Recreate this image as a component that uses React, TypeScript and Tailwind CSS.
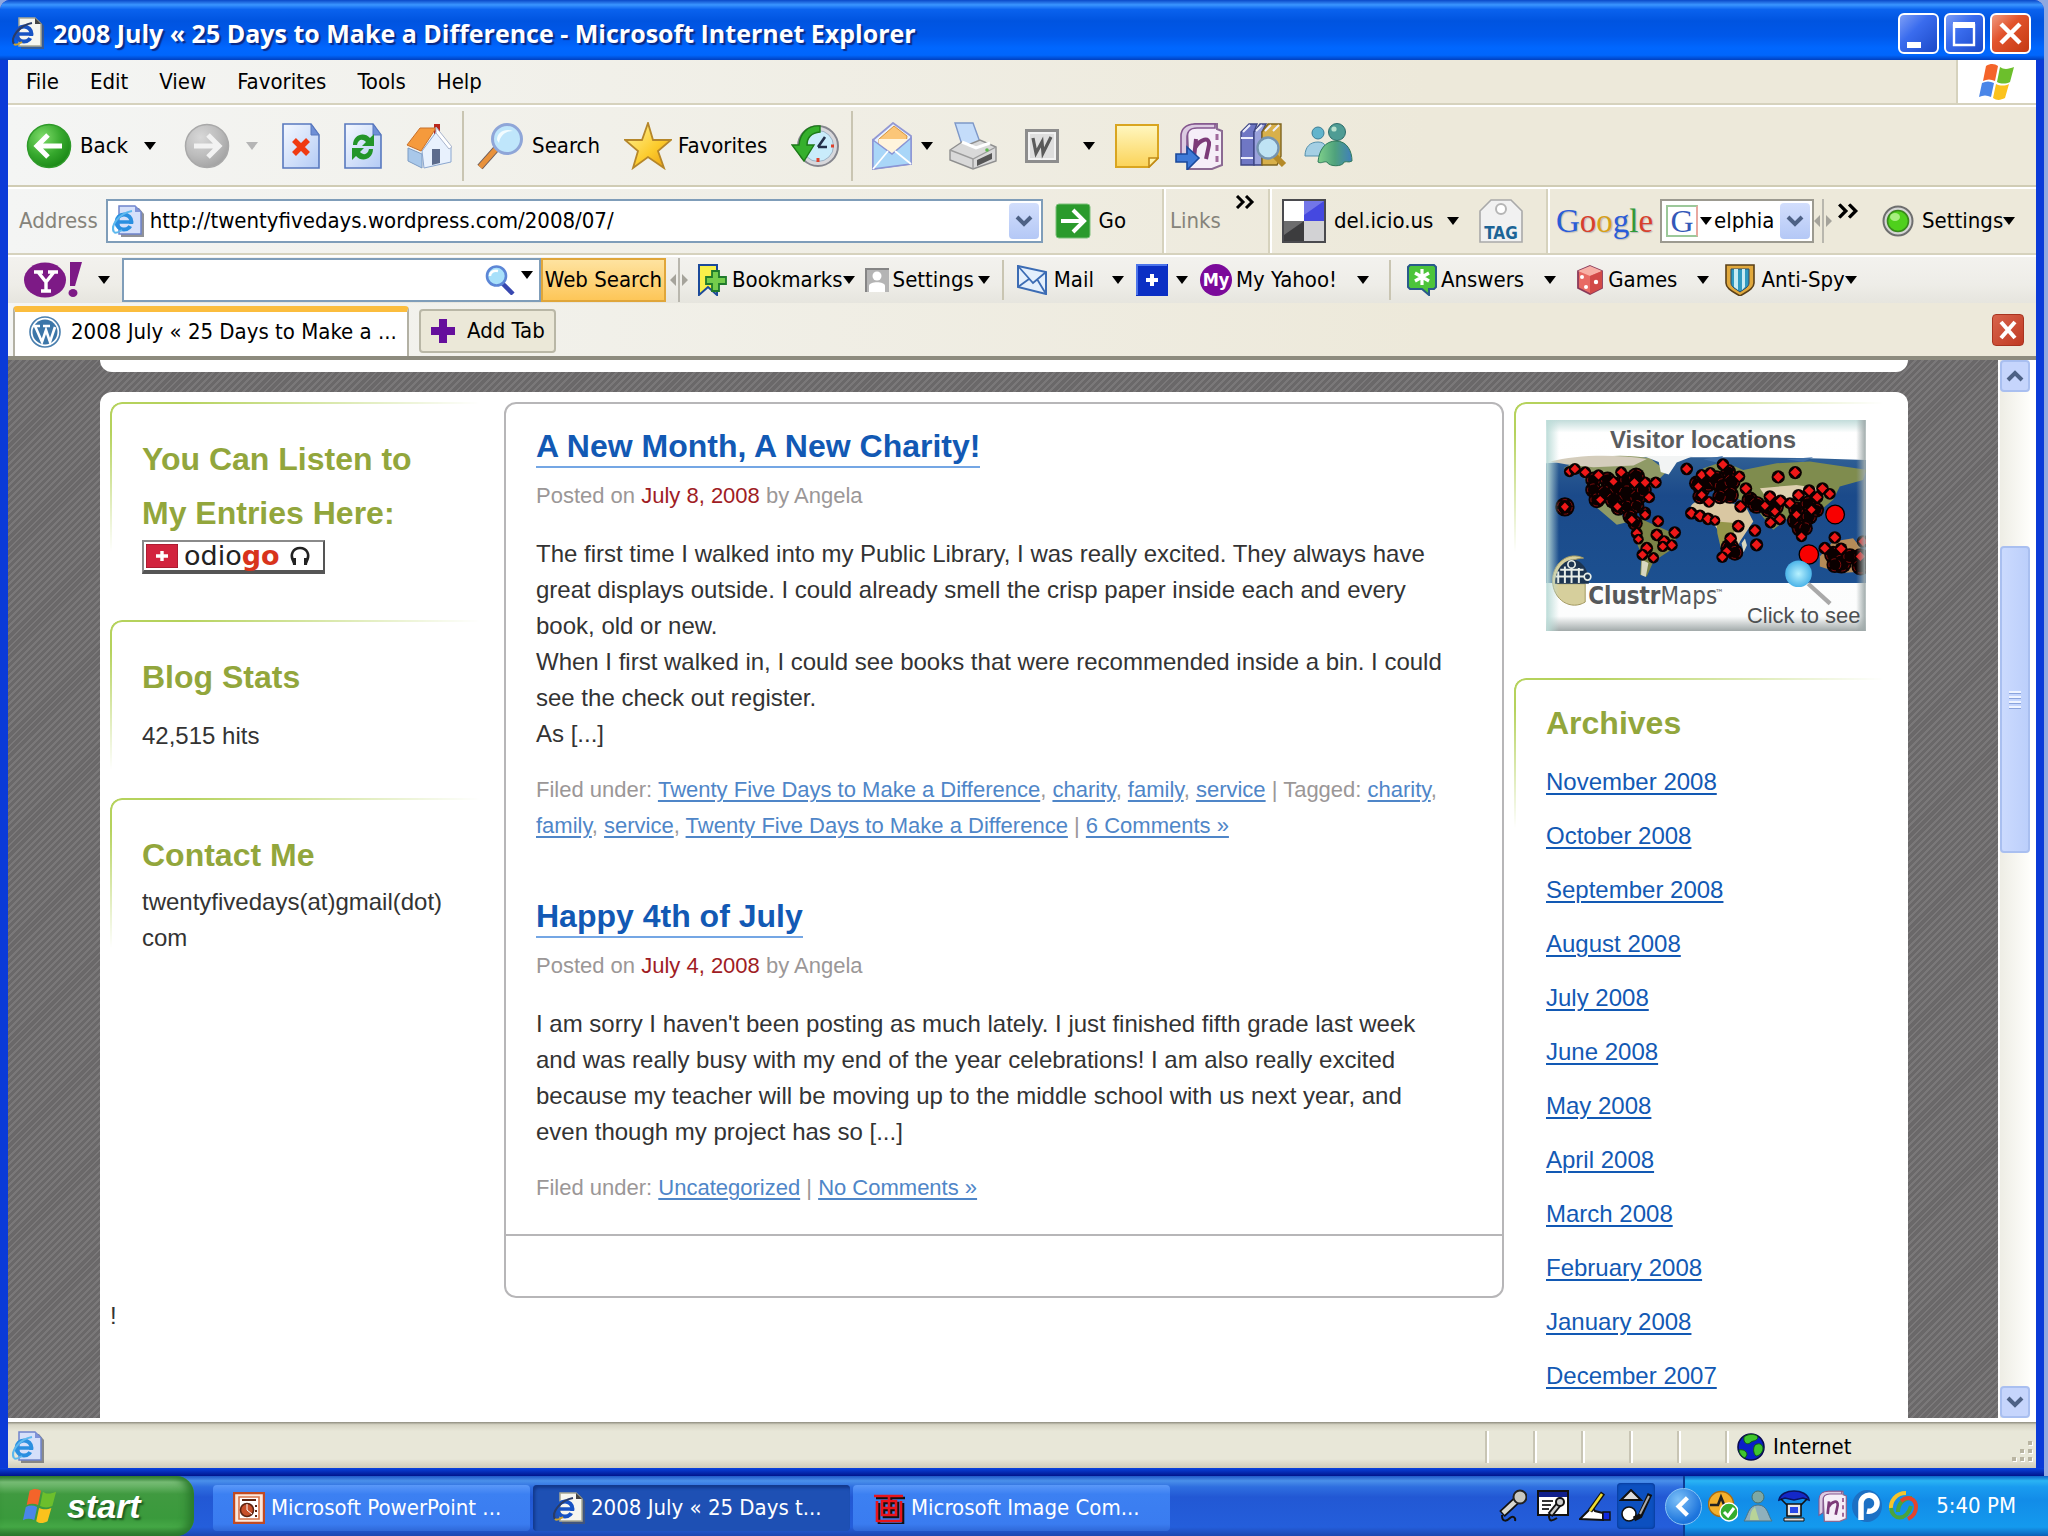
import type { ReactNode } from 'react'
import clsx from 'clsx'

/* ---------- small shared pieces ---------- */

function Caret({ className = '', fill = '#000' }: { className?: string; fill?: string }) {
  return (
    <svg viewBox="0 0 12 8" className={clsx('w-3 h-2 shrink-0', className)}>
      <path d="M0 0h12L6 8z" fill={fill} />
    </svg>
  )
}

function Chevron({ up = false }: { up?: boolean }) {
  return (
    <svg viewBox="0 0 18 12" className="w-[18px] h-3">
      <path d={up ? 'M2 10l7-7 7 7' : 'M2 2l7 7 7-7'} fill="none" stroke="#4d6185" strokeWidth="4" />
    </svg>
  )
}

function Sep({ className = '' }: { className?: string }) {
  return <div className={clsx('w-0.5 shrink-0 bg-[#c9c5b2]', className)} />
}

function DoubleArrow({ className = '' }: { className?: string }) {
  return (
    <svg viewBox="0 0 20 14" className={clsx('w-5 h-3.5 shrink-0', className)}>
      <path d="M2 1l6 6-6 6M11 1l6 6-6 6" fill="none" stroke="#000" strokeWidth="3" />
    </svg>
  )
}

function Grip() {
  return (
    <svg viewBox="0 0 18 44" className="w-[18px] h-11 shrink-0">
      <path d="M9 0v44" stroke="#b9b7ae" strokeWidth="2" />
      <path d="M6 16v12l-6-6zM12 16v12l6-6z" fill="#a5a39b" />
    </svg>
  )
}

/* ---------- icons ---------- */

function IePage({ dark = false, className = 'w-8 h-8' }: { dark?: boolean; className?: string }) {
  return (
    <svg viewBox="0 0 32 32" className={clsx('shrink-0', className)}>
      <path d="M9 3h18l5 6v23H9z" fill="#55585f" opacity=".65" />
      <path d="M7 1h16l6 6v22H7z" fill={dark ? '#f6f6f0' : '#d5e0fa'} stroke={dark ? '#a8a894' : '#6f84cc'} strokeWidth="1.5" />
      <path d="M23 1v6h6z" fill={dark ? '#444' : '#7f93d8'} />
      <circle cx="12" cy="17" r="7.5" fill="none" stroke={dark ? '#1753c4' : '#2a8fe0'} strokeWidth="4" />
      <path d="M6 17h13" stroke={dark ? '#1753c4' : '#2a8fe0'} strokeWidth="3.5" />
      <path d="M14 19h8v4z" fill={dark ? '#f6f6f0' : '#d5e0fa'} />
      <path d="M2 27C-2 20 8 8 20 6" fill="none" stroke={dark ? '#2b3c66' : '#5cb8ee'} strokeWidth="2.2" />
      <path d="M2 27c2 2 5 0 8-2" fill="none" stroke={dark ? '#c8a030' : '#5cb8ee'} strokeWidth="2" />
    </svg>
  )
}

function WinFlag({ className }: { className: string }) {
  return (
    <svg viewBox="0 0 40 38" className={clsx('shrink-0', className)}>
      <path d="M9 3c5-3 9-2 12 0l-3 15c-4-2-8-2-12 0z" fill="#f4642a" />
      <path d="M23 4c4 3 9 2 14 0l-4 15c-4 2-9 2-13 0z" fill="#6cbf2c" />
      <path d="M5 20c4-2 8-2 12 0l-3 14c-4-2-8-2-12 0z" fill="#4a86e8" />
      <path d="M19 21c4 2 9 2 13 0l-4 14c-4 2-8 3-12 0z" fill="#fbc21d" />
    </svg>
  )
}

function BackIcon({ off = false }: { off?: boolean }) {
  return (
    <svg viewBox="0 0 46 46" className="w-[46px] h-[46px] shrink-0">
      <defs>
        <radialGradient id={off ? 'fwd' : 'bck'} cx=".35" cy=".3" r=".8">
          <stop offset="0" stopColor={off ? '#d8d8d8' : '#7fdc6a'} />
          <stop offset=".55" stopColor={off ? '#bcbcbc' : '#36a82d'} />
          <stop offset="1" stopColor={off ? '#9e9e9e' : '#158212'} />
        </radialGradient>
      </defs>
      <circle cx="23" cy="23" r="21.5" fill={off ? 'url(#fwd)' : 'url(#bck)'} stroke={off ? '#a9a9a9' : '#2f9a2a'} strokeWidth="1.5" />
      <path
        d={off ? 'M10 23h24M24 12l11 11-11 11' : 'M36 23H12M22 12L11 23l11 11'}
        fill="none" stroke={off ? '#f2f2f2' : '#fff'} strokeWidth="5"
      />
    </svg>
  )
}

function PageIcon({ children }: { children: ReactNode }) {
  return (
    <svg viewBox="0 0 38 46" className="w-[38px] h-[46px] shrink-0">
      <defs>
        <linearGradient id="pg" x1="0" y1="0" x2="1" y2="1">
          <stop offset="0" stopColor="#f4f8ff" />
          <stop offset="1" stopColor="#b4cbf5" />
        </linearGradient>
      </defs>
      <path d="M1 1h28l8 11v33H1z" fill="url(#pg)" stroke="#5878be" strokeWidth="1.6" />
      <path d="M29 1v11h8z" fill="#6f8fd6" stroke="#5878be" />
      {children}
    </svg>
  )
}

function HomeIcon() {
  return (
    <svg viewBox="0 0 46 46" className="w-[46px] h-[46px] shrink-0">
      <path d="M28 1h6v10h-6z" fill="#b8271c" />
      <path d="M2 25l14 6v14L2 38z" fill="#a9c8ea" stroke="#7d9cc4" />
      <path d="M16 28L31 8l14 17v14l-27 6z" fill="#e8f1fd" stroke="#8aa6cf" />
      <path d="M14 5h16L15 28 1 22z" fill="#f59a3c" stroke="#c8702a" />
      <path d="M30 4l16 20-3 2L30 10z" fill="#fff" stroke="#a8b4cc" />
      <path d="M26 26h8v14l-8 2z" fill="#5d6c8c" />
    </svg>
  )
}

function Magnifier({ handle, className }: { handle: string; className: string }) {
  return (
    <svg viewBox="0 0 48 48" className={clsx('shrink-0', className)}>
      <path d="M20 27L4 45" stroke="#6a5a5a" strokeWidth="7" />
      <path d="M20 27L4 45" stroke={handle} strokeWidth="5" />
      <circle cx="31" cy="17" r="14.5" fill="#bfe6fb" stroke="#8fa6d8" strokeWidth="3" />
      <path d="M21 18c0-8 8-12 16-9-8 0-13 5-14 12z" fill="#f2fcff" />
    </svg>
  )
}

function StarIcon() {
  return (
    <svg viewBox="0 0 48 48" className="w-12 h-12 shrink-0">
      <defs>
        <linearGradient id="star" x1="0" y1="0" x2="1" y2="1">
          <stop offset="0" stopColor="#fff6a0" />
          <stop offset=".6" stopColor="#fccb2c" />
          <stop offset="1" stopColor="#e99a10" />
        </linearGradient>
      </defs>
      <path d="M24 1l5 17 18 0-13 11 6 17-16-11L9 46l5-17L1 18h17z" fill="url(#star)" stroke="#b5862a" strokeWidth="1.8" />
    </svg>
  )
}

function HistoryIcon() {
  return (
    <svg viewBox="0 0 48 48" className="w-12 h-12 shrink-0">
      <circle cx="27" cy="24" r="20" fill="#d8d8dc" stroke="#85868e" strokeWidth="2" />
      <circle cx="27" cy="24" r="15.5" fill="#c9ecfb" stroke="#9fb2c4" />
      <path d="M27 25l7-10M27 25h9" stroke="#24304a" strokeWidth="2.6" />
      <path d="M27 36v4M40 24h3" stroke="#e0402a" strokeWidth="3" />
      <path d="M29 4C17 3 9 11 8 23H1l12 16 10-16h-7c0-7 4-12 13-13z" fill="#35b02c" stroke="#1c7a18" strokeWidth="1.4" />
    </svg>
  )
}

function MailIcon() {
  return (
    <svg viewBox="0 0 42 48" className="w-[42px] h-12 shrink-0">
      <path d="M2 18L22 1l18 13v28L2 47z" fill="#eaf3ff" stroke="#9298d4" strokeWidth="1.8" />
      <path d="M8 17L23 4l13 10-1 8-14 7-13-5z" fill="#fbc678" stroke="#d9953c" />
      <path d="M8 17h28v6l-15 8-13-5z" fill="#fff4dc" />
      <path d="M2 18l19 14 19-16v26L2 47z" fill="#a9d6f8" stroke="#8a94d4" strokeWidth="1.4" />
      <path d="M2 47l15-18M40 42L24 29" stroke="#fff" strokeWidth="1.8" />
    </svg>
  )
}

function PrinterIcon() {
  return (
    <svg viewBox="0 0 48 48" className="w-12 h-12 shrink-0">
      <path d="M6 1h18l8 22-18 3z" fill="#c4dcfa" stroke="#7e98c8" strokeWidth="1.4" />
      <path d="M1 28l12-8 6 3 12-5 16 7v14L24 47 1 38z" fill="#d9d9d9" stroke="#8f8f8f" strokeWidth="1.4" />
      <path d="M1 28l23 9 23-12M24 37v10" stroke="#9b9b9b" fill="none" strokeWidth="1.4" />
      <path d="M13 20l14 6 14-5" fill="none" stroke="#fff" strokeWidth="3" />
      <path d="M28 38l15-7v6l-15 7z" fill="#565656" />
      <circle cx="38" cy="28" r="1.8" fill="#5ab84a" />
    </svg>
  )
}

function WordIcon() {
  return (
    <svg viewBox="0 0 34 34" className="w-[34px] h-[34px] shrink-0">
      <rect x="1.5" y="1.5" width="31" height="31" fill="#f2f2f2" stroke="#8d8d8d" strokeWidth="3" />
      <path d="M5 5h24v24H5z" fill="#dedede" />
      <path d="M8 9l3 15 6-11 1 11 8-16" fill="none" stroke="#5a5a5a" strokeWidth="3.2" />
    </svg>
  )
}

function NoteIcon() {
  return (
    <svg viewBox="0 0 44 44" className="w-11 h-11 shrink-0">
      <defs>
        <linearGradient id="note" x1="0" y1="0" x2="0" y2="1">
          <stop offset="0" stopColor="#fff7c0" />
          <stop offset="1" stopColor="#fbd358" />
        </linearGradient>
      </defs>
      <path d="M1 1h42v33l-9 9H1z" fill="url(#note)" stroke="#d9a520" strokeWidth="2" />
      <path d="M34 43v-9h9z" fill="#fff3a8" stroke="#c08a18" strokeWidth="1.6" />
    </svg>
  )
}

function OneNote({ arrow = false, className }: { arrow?: boolean; className: string }) {
  return (
    <svg viewBox="0 0 48 48" className={clsx('shrink-0', className)}>
      <path d="M12 6l8-4h22v5l5 2v34l-10 4H14z" fill="#f5eef8" stroke="#8b6a92" strokeWidth="2" />
      <path d="M6 14c0-6 4-12 14-12h20v4H22c-8 0-10 4-10 10v18l-6 4z" fill="#dccbe2" stroke="#84568e" strokeWidth="1.6" />
      <path d="M19 36l2-19M20 26c5-9 15-12 14-3l-3 14" fill="none" stroke="#7c3a78" strokeWidth="4" />
      <path d="M42 12v6M42 23v6M42 34v6" stroke="#a06a9c" strokeWidth="3" />
      {arrow && <path d="M1 32h11v-7l12 11-12 12v-8H1z" fill="#3f7ad8" stroke="#1b4a9c" strokeWidth="1.6" />}
    </svg>
  )
}

function ResearchIcon() {
  return (
    <svg viewBox="0 0 48 48" className="w-12 h-12 shrink-0">
      <path d="M2 10l8-8h8l-3 8v33H2z" fill="#6f77c4" stroke="#3e4684" strokeWidth="1.4" />
      <path d="M15 10l6-8h6l-4 8v33h-8z" fill="#9aa2dc" stroke="#3e4684" strokeWidth="1.4" />
      <path d="M23 10l6-8h13v32l-4 9H23z" fill="#d8b04a" stroke="#7e6420" strokeWidth="1.4" />
      <path d="M2 16h12M2 36h12M4 10l7-7M17 9l6-6M26 9l6-6M34 9l6-6" stroke="#eceefc" strokeWidth="2" />
      <path d="M36 34l9 9" stroke="#b58a28" strokeWidth="6" />
      <circle cx="29" cy="26" r="10.5" fill="#bfe3f4" stroke="#7594b0" strokeWidth="2.4" />
    </svg>
  )
}

function BuddyIcon() {
  return (
    <svg viewBox="0 0 50 48" className="w-[50px] h-12 shrink-0">
      <defs>
        <linearGradient id="bud" x1="0" y1="0" x2="1" y2="0">
          <stop offset="0" stopColor="#7fd08a" /><stop offset=".5" stopColor="#4fa27c" /><stop offset="1" stopColor="#3f7fbc" />
        </linearGradient>
      </defs>
      <circle cx="15" cy="11" r="6" fill="#62b4cc" stroke="#3b7d96" />
      <path d="M2 34c0-9 5-14 13-14s9 6 9 14z" fill="#a4cfe4" stroke="#5490ac" />
      <circle cx="34" cy="10" r="8.5" fill="#4f9c94" stroke="#2d6c6a" />
      <path d="M15 40c1-12 7-21 18-21s16 10 16 20c-4 2-4 0-8 1-1 5-15 5-17 0-3-1-6 2-9 0z" fill="url(#bud)" stroke="#2f7a5a" />
      <circle cx="31" cy="7" r="2.6" fill="#b8e0cc" />
    </svg>
  )
}

function TagIcon() {
  return (
    <svg viewBox="0 0 44 44" className="w-11 h-11 shrink-0">
      <path d="M12 1h20l11 11v31H1V12z" fill="#f1f1f1" stroke="#a9a9a9" strokeWidth="1.6" />
      <circle cx="22" cy="10" r="5" fill="#fff" stroke="#b5b5b5" strokeWidth="2" />
      <text x="22" y="40" textAnchor="middle" className="font-['DejaVu_Sans_Condensed'] font-bold text-[17px]" fill="#1c6496">TAG</text>
    </svg>
  )
}

function Globe() {
  return (
    <svg viewBox="0 0 28 28" className="w-7 h-7 shrink-0">
      <circle cx="14" cy="14" r="13" fill="#0a1ec8" stroke="#0a0a50" strokeWidth="1.6" />
      <path d="M7 4c5-4 12-3 14 0-1 5-6 3-8 6-3 2-7 0-6-6zM18 12c5-3 8 0 8 4-1 5-5 7-7 7-3-3-3-8-1-11zM2 17c4-1 8 1 8 5l-2 3c-3-1-6-5-6-8z" fill="#3fc52e" stroke="#0d5a12" />
    </svg>
  )
}

/* ---------- browser chrome ---------- */

const ui = "font-['DejaVu_Sans_Condensed','DejaVu_Sans',sans-serif] text-[22px] leading-7"

function TitleBar() {
  return (
    <header className="h-[60px] shrink-0 flex items-center pl-3 pr-[13px] pt-1.5 rounded-t-[10px] bg-[linear-gradient(#0a48c8,#3a95ff_8%,#0a62ee_16%,#0054e0_35%,#0058ea_60%,#0067ff_80%,#0066fc_92%,#0040c0)]">
      <IePage dark className="w-8 h-8" />
      <h1 className="ml-[9px] flex-1 font-['Open_Sans'] font-bold text-[25px] leading-8 text-white whitespace-nowrap [text-shadow:2px_2px_1px_#0a2a86]">
        2008 July « 25 Days to Make a Difference - Microsoft Internet Explorer
      </h1>
      <div className="flex gap-[5px]">
        <WinButton label="Minimize"><path d="M9 29h14v6H9z" fill="#fff" /></WinButton>
        <WinButton label="Maximize"><path d="M10 12h20v20H10z" fill="none" stroke="#fff" strokeWidth="2.4" /><path d="M9 9h22v6H9z" fill="#fff" /></WinButton>
        <WinButton label="Close" red><path d="M11 11l19 19M30 11L11 30" stroke="#fff" strokeWidth="4.5" /></WinButton>
      </div>
    </header>
  )
}

function WinButton({ label, red = false, children }: { label: string; red?: boolean; children: ReactNode }) {
  return (
    <button
      aria-label={label}
      className={clsx(
        'w-[41px] h-[41px] rounded-md border-2 border-white',
        red
          ? 'bg-[linear-gradient(135deg,#f09a80,#e2532c_40%,#c43a12)]'
          : 'bg-[linear-gradient(135deg,#7d9ef6,#3a6cee_40%,#1b49c8)]'
      )}
    >
      <svg viewBox="2 2 37 37" className="w-full h-full">{children}</svg>
    </button>
  )
}

function MenuBar() {
  return (
    <div className="h-[47px] shrink-0 flex border-b-2 border-white">
      <nav className="flex-1 flex items-center gap-[31px] pl-[18px] border-b-2 border-r-2 border-[#d6d2bd]">
        {['File', 'Edit', 'View', 'Favorites', 'Tools', 'Help'].map((m) => (
          <button key={m}>{m}</button>
        ))}
      </nav>
      <div className="w-[78px] flex items-center justify-center bg-white border-b-2 border-[#d6d2bd]">
        <WinFlag className="w-10 h-[38px]" />
      </div>
    </div>
  )
}

function ToolBar() {
  return (
    <div className="h-20 shrink-0 flex items-center pl-[18px] border-b-2 border-[#d0ccb4]">
      <button className="flex items-center gap-2"><BackIcon />Back</button>
      <Caret className="ml-4" />
      <button className="ml-7" aria-label="Forward"><BackIcon off /></button>
      <Caret className="ml-4" fill="#b5b5b5" />
      <button className="ml-6" aria-label="Stop">
        <PageIcon><path d="M12 17l14 14M26 17L12 31" stroke="#f03a12" strokeWidth="5.5" /></PageIcon>
      </button>
      <button className="ml-6" aria-label="Refresh">
        <PageIcon>
          <path d="M9 22c0-10 11-14 17-7l4-4v12H18l4-4c-4-4-8-2-9 3zM29 26c0 10-11 14-17 7l-4 4V25h12l-4 4c4 4 8 2 9-3z" fill="#23952a" />
        </PageIcon>
      </button>
      <button className="ml-6" aria-label="Home"><HomeIcon /></button>
      <Sep className="ml-2.5 h-[70px]" />
      <button className="ml-3 flex items-center gap-2"><Magnifier handle="#e8913a" className="w-12 h-12" />Search</button>
      <button className="ml-6 flex items-center gap-1.5"><StarIcon />Favorites</button>
      <button className="ml-6" aria-label="History"><HistoryIcon /></button>
      <Sep className="ml-3 h-[70px]" />
      <button className="ml-[18px] flex items-center gap-2" aria-label="Mail"><MailIcon /><Caret /></button>
      <button className="ml-4" aria-label="Print"><PrinterIcon /></button>
      <button className="ml-7 flex items-center gap-6" aria-label="Edit with Word"><WordIcon /><Caret /></button>
      <button className="ml-5" aria-label="Notes"><NoteIcon /></button>
      <button className="ml-4" aria-label="OneNote"><OneNote arrow className="w-12 h-12" /></button>
      <button className="ml-4" aria-label="Research"><ResearchIcon /></button>
      <button className="ml-4" aria-label="Messenger"><BuddyIcon /></button>
    </div>
  )
}

function DropButton({ label }: { label: string }) {
  return (
    <button aria-label={label} className="w-[30px] h-9 shrink-0 flex items-center justify-center rounded-sm bg-[linear-gradient(#d2defc,#b4c8f6)]">
      <Chevron />
    </button>
  )
}

function AddressBar() {
  return (
    <div className="h-[68px] shrink-0 flex border-y-2 border-t-white border-b-[#d6d2bd]">
      <div className="flex-1 flex items-center pl-[11px] pr-9">
        <label htmlFor="address" className="text-[#85837a]">Address</label>
        <div className="ml-2 flex-1 h-11 flex items-center border-2 border-[#7f9db9] bg-white pl-1 pr-0.5">
          <IePage />
          <input id="address" className="flex-1 min-w-0 ml-1.5 outline-none" defaultValue="http://twentyfivedays.wordpress.com/2008/07/" />
          <DropButton label="Show address list" />
        </div>
        <button className="ml-3 flex items-center gap-2">
          <svg viewBox="0 0 36 36" className="w-9 h-9">
            <rect x="1" y="1" width="34" height="34" rx="3" fill="#2a9a2c" stroke="#7cc07a" />
            <path d="M6 18h21M18 7l11 11-11 11" fill="none" stroke="#fff" strokeWidth="4" />
          </svg>
          Go
        </button>
      </div>
      <div className="w-[106px] flex pl-1.5 border-l-2 border-[#d6d2bd] shadow-[inset_2px_0_#fff]">
        <span className="self-center text-[#85837a]">Links</span>
        <DoubleArrow className="mt-1.5 ml-3.5" />
      </div>
      <div className="w-[278px] flex items-center pl-3 border-l-2 border-[#d6d2bd] shadow-[inset_2px_0_#fff]">
        <button className="flex items-center gap-2">
          <svg viewBox="0 0 44 44" className="w-11 h-11">
            <path d="M0 0h44v44H0z" fill="#4a4a4e" />
            <path d="M2 2h20v20H2z" fill="#fff" /><path d="M22 2h20v20H22z" fill="#4548e0" />
            <path d="M2 22h20v20H2z" fill="#3c3c3e" /><path d="M22 22h20v20H22z" fill="#d2d2d4" />
            <path d="M2 36l20-14H2zM22 16L42 2H22z" fill="#fff" opacity=".25" />
          </svg>
          del.icio.us
        </button>
        <Caret className="ml-3.5" />
        <button className="ml-5" aria-label="Tag this page"><TagIcon /></button>
      </div>
      <div className="w-[490px] flex items-center pl-2 border-l-2 border-[#d6d2bd] shadow-[inset_2px_0_#fff]">
        <span className="font-['Liberation_Serif'] text-[33px] w-[104px] [text-shadow:1px_1px_1px_#bbb]">
          <span className="text-[#2a5cd8]">G</span><span className="text-[#d8402c]">o</span><span className="text-[#d8a018]">o</span>
          <span className="text-[#2a5cd8]">g</span><span className="text-[#2f9a38]">l</span><span className="text-[#d8402c]">e</span>
        </span>
        <div className="w-[154px] h-11 flex items-center border-2 border-[#9c9a90] bg-white pl-1 pr-0.5">
          <span className="w-8 h-8 shrink-0 flex items-center justify-center border-2 border-[#9cc89a] border-r-[#e8a8a0] font-['Liberation_Serif'] text-[32px] text-[#3358b8]">G</span>
          <Caret className="ml-0.5" />
          <input aria-label="Google search" className="flex-1 min-w-0 ml-0.5 outline-none" defaultValue="elphia" />
          <DropButton label="Search history" />
        </div>
        <Grip />
        <DoubleArrow className="ml-1.5 mb-5 scale-110" />
        <button className="ml-6 flex items-center gap-2">
          <svg viewBox="0 0 32 32" className="w-8 h-8">
            <circle cx="16" cy="16" r="14.5" fill="#d5d5d5" stroke="#6e6e6e" strokeWidth="2" />
            <circle cx="16" cy="16" r="10.5" fill="#4fd01c" stroke="#3a8a1c" strokeWidth="1.6" />
            <ellipse cx="13" cy="12" rx="5" ry="4" fill="#a8f080" />
          </svg>
          <span className="flex items-center">Settings<Caret /></span>
        </button>
      </div>
    </div>
  )
}

function YahooBar() {
  return (
    <div className="h-12 shrink-0 flex items-center pl-4 border-t-2 border-white bg-[linear-gradient(#f3f2ee,#eeede8_60%,#e6e5de)]">
      <button aria-label="Yahoo!">
        <svg viewBox="0 0 58 36" className="w-[58px] h-9">
          <ellipse cx="21" cy="18" rx="21" ry="17.5" fill="#7d1a86" />
          <path d="M46 0h12l-7 24h-5z" fill="#7d1a86" /><ellipse cx="49" cy="31" rx="4.5" ry="4" fill="#7d1a86" />
          <path d="M10 10h9M24 10h10M14 10l8 10 8-10M22 20v9M17 29h10" fill="none" stroke="#fff" strokeWidth="3.4" />
        </svg>
      </button>
      <Caret className="ml-4" />
      <div className="ml-3 w-[419px] h-11 flex items-center border-2 border-[#7f9db9] bg-white pr-1.5">
        <input aria-label="Yahoo search" className="flex-1 min-w-0 px-2 outline-none" />
        <svg viewBox="0 0 30 30" className="w-[30px] h-[30px] mr-1.5">
          <path d="M16 17l12 12" stroke="#3848b0" strokeWidth="4.5" />
          <circle cx="11.5" cy="11" r="9.5" fill="#a8e0fa" stroke="#5c86d6" strokeWidth="2.6" />
          <path d="M5 11c0-4 4-6 8-5" fill="none" stroke="#fff" strokeWidth="2.4" />
        </svg>
        <Caret className="mb-2.5" />
      </div>
      <button className="w-[125px] h-11 border-2 border-[#e0a63a] bg-[linear-gradient(#fee3a0,#fdc658)] whitespace-nowrap flex items-center justify-center">Web Search</button>
      <div className="ml-1"><Grip /></div>
      <button className="ml-2 flex items-center gap-1">
        <svg viewBox="0 0 32 32" className="w-8 h-8">
          <path d="M3 1h18v30l-9-8-9 8z" fill="#f8f04a" stroke="#1c4a9a" strokeWidth="2" />
          <path d="M16 7h7v6h7v7h-7v7h-7v-7h-6v-7h6z" fill="#74cc4c" stroke="#1f7a2c" strokeWidth="1.8" />
        </svg>
        <span className="flex items-center">Bookmarks<Caret /></span>
      </button>
      <button className="ml-2.5 flex items-center gap-1">
        <svg viewBox="0 0 24 24" className="w-6 h-6">
          <path d="M0 0h24v24H0z" fill="#b4b4b4" /><path d="M1 24V1h23" fill="none" stroke="#858585" strokeWidth="2" />
          <circle cx="12" cy="8" r="4.5" fill="#fff" /><path d="M4 24v-6c0-5 16-5 16 0v6z" fill="#fff" />
        </svg>
        Settings<Caret />
      </button>
      <Sep className="ml-3 h-10" />
      <button className="ml-3 flex items-center gap-1.5">
        <svg viewBox="0 0 32 30" className="w-8 h-[30px]">
          <path d="M2 1l28 6v22L2 22z" fill="#e4effc" stroke="#3c6cb4" strokeWidth="2" />
          <path d="M2 1l15 17L30 7M2 22l11-8M30 29l-9-15" fill="none" stroke="#3c6cb4" strokeWidth="1.8" />
        </svg>
        Mail<Caret className="ml-3" />
      </button>
      <button className="ml-3 flex items-center gap-2" aria-label="Add button">
        <svg viewBox="0 0 32 32" className="w-8 h-8">
          <path d="M0 0h32v32H0z" fill="#0b2fc4" /><path d="M1 31V1h30" fill="none" stroke="#4c74ea" strokeWidth="2" />
          <path d="M16 10v12M10 16h12" stroke="#fff" strokeWidth="4" />
        </svg>
        <Caret />
      </button>
      <button className="ml-3 flex items-center gap-1">
        <svg viewBox="0 0 32 32" className="w-8 h-8">
          <circle cx="16" cy="16" r="16" fill="#7b0a9a" />
          <text x="16" y="22" textAnchor="middle" fill="#fff" className="font-['DejaVu_Sans_Condensed'] font-bold text-[18px]">My</text>
        </svg>
        My Yahoo!<Caret className="ml-4" />
      </button>
      <Sep className="ml-5 h-10" />
      <button className="ml-4 flex items-center gap-1">
        <svg viewBox="0 0 30 32" className="w-[30px] h-8">
          <path d="M3 1h24l2 2v20l-2 2h-5v6l-7-6H3l-2-2V3z" fill="#4cc43a" stroke="#2a5a8a" strokeWidth="2" />
          <path d="M15 5v16M8 9l14 8M22 9L8 17" stroke="#fff" strokeWidth="3.2" />
        </svg>
        Answers<Caret className="ml-4" />
      </button>
      <button className="ml-5 flex items-center gap-1">
        <svg viewBox="0 0 28 30" className="w-7 h-[30px]">
          <path d="M14 1l12 5v17l-12 6-12-6V6z" fill="#e86a64" stroke="#8a3a5a" strokeWidth="1.8" />
          <path d="M14 1l12 5-12 5L2 6z" fill="#f8b0a6" /><path d="M14 11l12-5v17l-12 6z" fill="#d24a48" />
          <circle cx="6" cy="12" r="2" fill="#fff" /><circle cx="10" cy="22" r="2" fill="#fff" /><circle cx="20" cy="17" r="2.2" fill="#fff" />
        </svg>
        Games<Caret className="ml-4" />
      </button>
      <button className="ml-4 flex items-center gap-1.5">
        <svg viewBox="0 0 30 32" className="w-[30px] h-8">
          <path d="M1 1h28v18c0 6-8 9-14 13C9 28 1 25 1 19z" fill="#e0a83c" stroke="#5a4018" strokeWidth="1.6" />
          <path d="M6 5h18v14c0 4-5 6-9 9-4-3-9-5-9-9z" fill="#2f9ac0" stroke="#2a4a6a" />
          <path d="M9 5h4v21l-4-3zM17 5h3v18l-3 3z" fill="#c8ecf4" />
        </svg>
        <span className="flex items-center">Anti-Spy<Caret /></span>
      </button>
    </div>
  )
}

function TabBar() {
  return (
    <div className="h-[57px] shrink-0 flex items-start pt-[3px] pl-[5px] pr-3 border-b-4 border-[#8d8b7e]">
      <button className="w-[396px] h-[50px] flex items-center pb-1 pl-3.5 bg-white border-x-2 border-t-[6px] border-t-[#fbbd3e] border-x-[#b3b1a4] rounded-t">
        <svg viewBox="0 0 32 32" className="w-8 h-8">
          <circle cx="16" cy="16" r="15" fill="#fff" stroke="#4a7fae" strokeWidth="1.6" />
          <circle cx="16" cy="16" r="12.5" fill="#3c76a8" />
          <path d="M6 10l7 16 4-12 4 12 5-15M4 10h7M14 10h7" fill="none" stroke="#fff" strokeWidth="2.6" />
        </svg>
        <span className="ml-2.5 whitespace-nowrap">2008 July « 25 Days to Make a ...</span>
      </button>
      <button className="ml-2.5 mt-[3px] w-[137px] h-11 flex items-center gap-3 pl-2.5 border-2 border-[#b9b7a6] rounded-sm bg-[#ebe8d8] whitespace-nowrap">
        <svg viewBox="0 0 24 24" className="w-6 h-6"><path d="M8 0h8v8h8v8h-8v8H8v-8H0V8h8z" fill="#650f9c" /></svg>
        Add Tab
      </button>
      <div className="flex-1" />
      <button aria-label="Close tab" className="mt-2 w-8 h-8 rounded-sm bg-[linear-gradient(135deg,#d8644c,#c03a22)] border border-[#a83420]">
        <svg viewBox="0 0 30 30" className="w-full h-full"><path d="M8 7l14 16M22 7L8 23" stroke="#fff" strokeWidth="4" /></svg>
      </button>
    </div>
  )
}

/* ---------- blog page ---------- */

function SideBox({ className = '', children }: { className?: string; children: ReactNode }) {
  return (
    <section className={clsx('relative pl-8', className)}>
      <div className="absolute left-0 top-0 w-[370px] h-[150px] rounded-tl-xl border-t-2 border-l-2 border-[#b5d25c] [mask-image:radial-gradient(370px_150px_at_top_left,black_20%,transparent)]" />
      {children}
    </section>
  )
}

function LeftColumn() {
  return (
    <aside>
      <SideBox className="h-[218px] pt-[30px]">
        <h2 className="text-[32px] leading-[54px] font-bold text-[#92a63c]">You Can Listen to<br />My Entries Here:</h2>
        <a href="#" className="w-[183px] h-[34px] flex items-center pl-0.5 border-2 border-[#8a8a8a] border-r-[#555] border-b-[#555] border-b-4 bg-white font-['DejaVu_Sans'] text-[27px] leading-6">
          <svg viewBox="0 0 32 24" className="w-8 h-6">
            <path d="M0 0h32v24H0z" fill="#d2243e" stroke="#8a1426" /><path d="M16 7v10M10 12h12" stroke="#fff" strokeWidth="3.4" />
          </svg>
          <span className="ml-1.5 text-[#222]">odio<b className="text-[#d8341c]">go</b></span>
          <svg viewBox="0 0 20 20" className="w-5 h-5 ml-2.5">
            <path d="M5 18C-2 8 4 2 10 2s12 6 5 16" fill="none" stroke="#222" strokeWidth="2.6" /><path d="M2 12h4v7H3zM18 12h-4v7h3z" fill="#222" />
          </svg>
        </a>
      </SideBox>
      <SideBox className="h-[178px] pt-[30px]">
        <h2 className="text-[32px] leading-[54px] font-bold text-[#92a63c]">Blog Stats</h2>
        <p className="mt-[14px]">42,515 hits</p>
      </SideBox>
      <SideBox className="h-[500px] pt-[30px]">
        <h2 className="text-[32px] leading-[54px] font-bold text-[#92a63c]">Contact Me</h2>
        <p className="mt-0.5">twentyfivedays(at)gmail(dot)<br />com</p>
      </SideBox>
      <p>!</p>
    </aside>
  )
}

type Post = { title: string; date: string; body: string[]; tags: ReactNode }

function Tag({ children }: { children: ReactNode }) {
  return <a href="#" className="text-[#4f86c8] underline underline-offset-3 decoration-2">{children}</a>
}

const posts: Post[] = [
  {
    title: 'A New Month, A New Charity!',
    date: 'July 8, 2008',
    body: [
      'The first time I walked into my Public Library, I was really excited. They always have great displays outside. I could already smell the crisp paper inside each and every book, old or new.',
      'When I first walked in, I could see books that were recommended inside a bin. I could see the check out register.',
      'As [...]'
    ],
    tags: (
      <>
        <Tag>Twenty Five Days to Make a Difference</Tag>, <Tag>charity</Tag>, <Tag>family</Tag>, <Tag>service</Tag> | Tagged: <Tag>charity</Tag>,{' '}
        <Tag>family</Tag>, <Tag>service</Tag>, <Tag>Twenty Five Days to Make a Difference</Tag> | <Tag>6 Comments »</Tag>
      </>
    )
  },
  {
    title: 'Happy 4th of July',
    date: 'July 4, 2008',
    body: [
      "I am sorry I haven't been posting as much lately. I just finished fifth grade last week and was really busy with my end of the year celebrations! I am also really excited because my teacher will be moving up to the middle school with us next year, and even though my project has so [...]"
    ],
    tags: <><Tag>Uncategorized</Tag> | <Tag>No Comments »</Tag></>
  }
]

function PostView({ post }: { post: Post }) {
  return (
    <article className="mb-[52px]">
      <h2 className="text-[32px] leading-10 font-bold">
        <a href="#" className="inline-block text-[#1259b4] border-b-2 border-[#74a6e4]">{post.title}</a>
      </h2>
      <p className="mt-2.5 text-[22px] text-[#9b9797]">
        Posted on <span className="text-[#a01c24]">{post.date}</span> by Angela
      </p>
      <div className="mt-[22px]">{post.body.map((t) => <p key={t}>{t}</p>)}</div>
      <p className="mt-5 text-[22px] text-[#9b9797]">Filed under: {post.tags}</p>
    </article>
  )
}

function Posts() {
  return (
    <main className="self-start border-2 border-[#b7b6b8] rounded-xl">
      <div className="pl-[30px] pr-12 pt-[22px] h-[832px] border-b-2 border-[#b7b6b8] overflow-hidden">
        {posts.map((p) => <PostView key={p.title} post={p} />)}
      </div>
      <div className="h-[60px]" />
    </main>
  )
}

// [x, y, r] of every visitor dot
const dots: number[][] = [
  [104, 321, 24], [118, 215, 12], [190, 240, 20], [190, 270, 20], [200, 300, 20], [232, 240, 20],
  [225, 280, 22], [250, 300, 22], [262, 260, 24], [290, 240, 20], [318, 230, 22], [290, 280, 24], [322, 292, 22],
  [340, 270, 20], [265, 325, 18], [290, 320, 18], [320, 318, 18], [300, 350, 18], [315, 370, 18],
  [500, 250, 18], [515, 270, 20], [510, 290, 18], [535, 250, 22], [560, 240, 24],
  [595, 215, 18], [580, 260, 26], [605, 245, 22], [600, 285, 22], [570, 290, 18],
  [660, 300, 20], [680, 315, 22], [600, 445, 24], [615, 458, 20],
  [715, 330, 18], [735, 320, 22], [800, 330, 20], [796, 362, 20], [812, 385, 22],
  [835, 312, 20], [838, 350, 20], [860, 330, 18], [826, 385, 18],
  [910, 465, 22], [935, 490, 26], [960, 470, 20], [915, 495, 20], [992, 470, 20], [992, 500, 22],
  [134, 207, 13], [165, 217, 13], [205, 226, 13], [273, 217, 13], [313, 248, 13], [345, 248, 13], [377, 248, 13], [357, 292, 13], [345, 338, 13],
  [320, 400, 13], [325, 418, 11], [384, 364, 13], [345, 345, 12], [380, 405, 14], [402, 425, 14], [434, 398, 14], [425, 436, 13], [350, 445, 14],
  [337, 465, 13], [370, 474, 12], [398, 440, 12], [305, 360, 12], [250, 245, 12], [210, 300, 12], [262, 320, 12],
  [470, 207, 14], [515, 225, 13], [541, 219, 13], [579, 194, 14], [628, 230, 13], [537, 306, 13], [505, 260, 12], [515, 285, 12],
  [648, 266, 14], [632, 320, 14], [484, 340, 14], [510, 348, 14], [534, 357, 14], [555, 362, 11], [625, 379, 14], [675, 392, 14],
  [680, 435, 15], [602, 416, 14], [590, 455, 13], [577, 472, 13],
  [745, 231, 15], [796, 218, 15], [720, 290, 14], [752, 303, 14], [722, 368, 13], [750, 358, 13], [780, 310, 13], [705, 318, 12], [735, 335, 12],
  [806, 286, 14], [838, 272, 14], [862, 292, 14], [878, 266, 14], [900, 282, 13], [815, 410, 12], [800, 345, 12], [845, 330, 12],
  [915, 413, 14], [885, 445, 14], [934, 447, 14], [1000, 425, 14], [992, 470, 14]
]

function VisitorMap() {
  return (
    <a href="#" className="block w-80 h-[211px]">
      <svg viewBox="48 60 960 634" className="w-full h-full" aria-label="Visitor locations">
        <defs>
          <linearGradient id="frame" x1="0" y1="0" x2="0" y2="1">
            <stop offset="0" stopColor="#c2dcda" /><stop offset=".06" stopColor="#fff" />
            <stop offset=".93" stopColor="#fcfdfd" /><stop offset="1" stopColor="#a2aaaa" />
          </linearGradient>
          <linearGradient id="frameL" x1="0" y1="0" x2="1" y2="0">
            <stop offset="0" stopColor="#bcdcd8" /><stop offset=".04" stopColor="#bcdcd8" stopOpacity="0" />
            <stop offset=".97" stopColor="#9aa5a5" stopOpacity="0" /><stop offset="1" stopColor="#a0abab" />
          </linearGradient>
          <linearGradient id="sea" x1="0" y1="0" x2="0" y2="1">
            <stop offset="0" stopColor="#2f5f94" /><stop offset=".3" stopColor="#1b4a8a" /><stop offset="1" stopColor="#1c5090" />
          </linearGradient>
          <radialGradient id="lens"><stop offset="0" stopColor="#b8f2ff" /><stop offset="1" stopColor="#4cb4e8" /></radialGradient>
        </defs>
        <path d="M48 60h960v634H48z" fill="url(#frame)" />
        <path d="M48 190c90-10 200-8 300-18 200 0 400-2 660 8v370H48z" fill="url(#sea)" />
        {/* land masses */}
        <path d="M100 205c60-40 180-45 260-30l50 40-60 60-90 60 40 30-40 10-70-60-30-90-40-20z" fill="#8f9a66" />
        <path d="M60 185c80-22 200-22 290-8l-40 20-120 5-80-8z" fill="#d4cdbc" />
        <path d="M340 168h150l-50 20-24 36-24-8-6-30z" fill="#f2f4f4" />
        <path d="M300 340l50 25 90 40-10 40-60 40-20 45-20-5 5-60-30-70z" fill="#7c8448" />
        <path d="M480 330c0-30 50-40 110-25l60 20 20 40-40 60-20 50-20-5-20-70-20-30-40-5z" fill="#d9c7a2" />
        <path d="M560 365l65 5-25 55-10 40-14-5-14-60z" fill="#95964a" />
        <path d="M490 250l30-45 60-20 60 25 100-20 100-5 170 25-10 30-70 20-20 40-60 50-40 60-30-60-50 40-40-50-60-40z" fill="#7f8c4e" />
        <path d="M690 265l110-10 70 10-50 35-100 10z" fill="#ddd0b0" />
        <path d="M870 470l40-45 60-10 40 50v50l-80 5-60-20z" fill="#b58b58" />
        <path d="M635 430l10-14 6 20-10 22zM335 480l20 10-8 42-14-6z" fill="#d8d8c0" />
        <path d="M520 178l60-10-20 20zM770 178l80-6-30 14z" fill="#3f6ea4" />
        {dots.map(([x, y, r], i) => (
          <g key={i}>
            <circle cx={x} cy={y} r={r + 5} fill="#0a0000" />
            {r > 16
              ? <circle cx={x} cy={y} r={r - 2} fill="none" stroke="#b81414" strokeWidth="2" strokeDasharray="14 10" />
              : <path d={`M${x - r} ${y}l${r}-${r} ${r} ${r}-${r} ${r}z`} fill="#ee1818" />}
          </g>
        ))}
        <path d="M92 321l12-13 12 13-12 13z" fill="#ee1818" />
        <circle cx="916" cy="344" r="28" fill="#f80000" stroke="#000" strokeWidth="4" />
        <circle cx="837" cy="464" r="29" fill="#f80000" stroke="#000" strokeWidth="4" />
        {/* logo mark */}
        <path d="M160 475a66 74 0 1 0 5 132v-55H80c0-40 30-75 80-77z" fill="#d6cf9c" stroke="#a39a62" strokeWidth="3" />
        <path d="M74 552c0-45 30-72 52-72s50 20 50 72z" fill="#1c3450" />
        <path d="M76 530h106M84 515v35M104 500v50M124 490v60M146 505v45M90 510h70" stroke="#e8eee8" strokeWidth="6" />
        <circle cx="124" cy="494" r="11" fill="#1c3450" stroke="#e8eee8" strokeWidth="5" />
        <circle cx="172" cy="531" r="10" fill="#1c3450" stroke="#e8eee8" strokeWidth="5" />
        <path d="M835 552l66 60" stroke="#a9a9a9" strokeWidth="13" />
        <circle cx="806" cy="522" r="40" fill="url(#lens)" />
        <path d="M48 60h960v634H48z" fill="url(#frameL)" />
        <text x="519" y="144" textAnchor="middle" fill="#5a5c5e" className="font-['Liberation_Sans'] font-bold text-[72px]">Visitor locations</text>
        <text x="174" y="614" fill="#55585a" className="font-['DejaVu_Sans_Condensed'] text-[72px]"><tspan className="font-bold">Clustr</tspan>Maps</text>
        <text x="556" y="590" fill="#55585a" className="font-['DejaVu_Sans_Condensed'] text-[28px]">™</text>
        <text x="992" y="670" textAnchor="end" fill="#4d5052" className="font-['Liberation_Sans'] text-[66px]">Click to see</text>
      </svg>
    </a>
  )
}

const months = [
  'November 2008', 'October 2008', 'September 2008', 'August 2008', 'July 2008', 'June 2008', 'May 2008',
  'April 2008', 'March 2008', 'February 2008', 'January 2008', 'December 2007'
]

function RightColumn() {
  return (
    <aside>
      <SideBox className="h-[276px] pt-[18px]"><VisitorMap /></SideBox>
      <SideBox className="pt-[18px]">
        <h2 className="text-[32px] leading-[54px] font-bold text-[#92a63c]">Archives</h2>
        <ul className="mt-[5px] leading-[54px]">
          {months.map((m) => (
            <li key={m}><a href="#" className="text-[#1259b4] underline underline-offset-3 decoration-2">{m}</a></li>
          ))}
        </ul>
      </SideBox>
    </aside>
  )
}

function Viewport() {
  return (
    <div className="flex-1 min-h-0 flex">
      <div className="flex-1 min-w-0 overflow-hidden pl-[92px] pr-[90px] flex flex-col font-['Liberation_Sans',Arial,sans-serif] text-[24px] leading-9 text-[#333] bg-[repeating-linear-gradient(135deg,#6a6869_0_3px,#7a7879_3px_5px)]">
        <div className="h-3 shrink-0 bg-white rounded-b-xl" />
        <div className="mt-5 flex-1 min-h-0 overflow-hidden bg-white rounded-t-xl grid grid-cols-[384px_1fr_394px] gap-2.5 pl-2.5 pt-2.5">
          <LeftColumn />
          <Posts />
          <RightColumn />
        </div>
      </div>
      <div className="w-[38px] shrink-0 flex flex-col items-center bg-[linear-gradient(90deg,#eeede5,#fefefb)] border-l-2 border-r-6 border-white">
        <button aria-label="Scroll up" className="w-[30px] h-8 flex items-center justify-center rounded border-2 border-[#a9bff0] bg-[#c6d5fc]"><Chevron up /></button>
        <div className="flex-1 w-full flex flex-col items-center">
          <div className="grow-[154]" />
          <div className="grow-[286] w-[30px] rounded border-2 border-[#a9bff0] bg-[linear-gradient(90deg,#cbdafe,#bccffb)] flex flex-col items-center justify-center gap-[3px]">
            {[0, 1, 2, 3].map((i) => <div key={i} className="w-3 h-0.5 bg-[#eef3ff] shadow-[0_1px_#8ba4dc]" />)}
          </div>
          <div className="grow-[533]" />
        </div>
        <button aria-label="Scroll down" className="w-[30px] h-8 flex items-center justify-center rounded border-2 border-[#a9bff0] bg-[#c6d5fc]"><Chevron /></button>
      </div>
    </div>
  )
}

function StatusBar() {
  return (
    <footer className="h-[50px] shrink-0 flex items-center pl-1 pt-1 border-t-4 border-t-white bg-[linear-gradient(#8d8b7e,#d6d4c4_6%,#e8e7d8_20%,#e8e7d8_80%,#d0cdba)]">
      <IePage />
      <div className="flex-1" />
      {[0, 1, 2, 3, 4].map((i) => <div key={i} className="w-12 h-8 border-l-2 border-[#c8c5b4] shadow-[inset_2px_0_#fff]" />)}
      <div className="w-[311px] h-8 flex items-center gap-2 pl-2.5 border-l-2 border-[#c8c5b4] shadow-[inset_2px_0_#fff]">
        <Globe />
        Internet
        <svg viewBox="0 0 24 24" className="ml-auto mr-0.5 w-6 h-6 self-end">
          {[[18, 2], [18, 10], [10, 10], [18, 18], [10, 18], [2, 18]].map(([x, y]) => (
            <g key={x + '-' + y}><path d={`M${x + 1} ${y + 1}h4v4h-4z`} fill="#fff" /><path d={`M${x} ${y}h4v4h-4z`} fill="#b9b5a2" /></g>
          ))}
        </svg>
      </div>
    </footer>
  )
}

/* ---------- taskbar ---------- */

function Task({ active = false, icon, children }: { active?: boolean; icon: ReactNode; children: ReactNode }) {
  return (
    <button
      className={clsx(
        'w-[317px] h-[46px] flex items-center gap-1.5 pl-5 rounded whitespace-nowrap text-white',
        active
          ? 'bg-[#1e50b4] shadow-[inset_2px_3px_3px_#12388c]'
          : 'bg-[linear-gradient(#5a98f8,#3c80f2_20%,#3a7cf0_85%,#2f68d8)]'
      )}
    >
      {icon}
      {children}
    </button>
  )
}

function Taskbar() {
  return (
    <div className={clsx('h-[60px] shrink-0 flex items-stretch bg-[linear-gradient(#1f58c8,#4a90ea_8%,#2f6fe0_18%,#2258d4_35%,#245edb_85%,#1c46b0)]', ui)}>
      <button className="w-[194px] flex items-center pl-[21px] gap-2 rounded-r-[18px] bg-[linear-gradient(#2f7a30,#7cc07a_10%,#409a40_30%,#3a9a3c_70%,#45a846_85%,#2a742c)] shadow-[inset_-6px_0_8px_#2a7a2c]">
        <WinFlag className="w-[38px] h-9" />
        <span className="font-['Liberation_Sans'] font-bold italic text-[34px] text-white [text-shadow:2px_2px_2px_#1c5a1e]">start</span>
      </button>
      <div className="flex-1 flex items-center gap-[3px] pl-[19px] pt-1">
        <Task icon={
          <svg viewBox="0 0 32 32" className="w-8 h-8">
            <path d="M1 1h30v30H1z" fill="#fbe8dc" stroke="#c04a22" strokeWidth="2.4" /><path d="M6 5h20v22H6z" fill="#fff" stroke="#d8744a" strokeWidth="1.6" />
            <circle cx="14" cy="18" r="6.5" fill="#c8502a" stroke="#5c2412" strokeWidth="1.6" /><path d="M14 18v-6M14 18l5 4" stroke="#fff" /><path d="M9 8h14M23 13v2M23 18v2M23 23v2" stroke="#5c2412" strokeWidth="2" />
          </svg>
        }>Microsoft PowerPoint ...</Task>
        <Task active icon={<IePage dark className="w-8 h-8" />}>2008 July « 25 Days t...</Task>
        <Task icon={
          <svg viewBox="0 0 32 32" className="w-8 h-8">
            <g fill="none" strokeWidth="2.6">
              <path transform="translate(2 2)" stroke="#111" d="M1 4h29M4 9v21h24V9M9 9h14v14H9zM9 16h14M16 4v19" />
              <path stroke="#e8141c" d="M1 4h29M4 9v21M4 29h24M28 9v21M9 9h14v14H9zM9 16h14M16 4v19" />
            </g>
          </svg>
        }>Microsoft Image Com...</Task>
      </div>
      <div className="flex items-center gap-2.5 pr-8">
        <svg viewBox="0 0 28 34" className="w-7 h-[34px]">
          <path d="M18 11L3 25" stroke="#111" strokeWidth="8" /><path d="M18 11L4 24" stroke="#d8d8d0" strokeWidth="4.5" />
          <circle cx="21" cy="8" r="6.5" fill="#c8c8c0" stroke="#222" strokeWidth="2" /><path d="M3 26c0 8 5 6 8 3s6 0 5 3" fill="none" stroke="#111" strokeWidth="2" />
        </svg>
        <svg viewBox="0 0 32 34" className="w-8 h-[34px]">
          <path d="M1 2h30v24H1z" fill="#fff" stroke="#111" strokeWidth="2" /><path d="M2 3h28v5H2z" fill="#10208c" />
          <path d="M5 12h11M5 16h9M5 20h7" stroke="#333" strokeWidth="2" /><path d="M22 15L13 26" stroke="#111" strokeWidth="6" /><path d="M22 15l-8 10" stroke="#ccc" strokeWidth="2.6" />
          <circle cx="23" cy="13" r="4" fill="#ccc" stroke="#111" strokeWidth="2" /><path d="M12 27c0 7 5 4 8 2" fill="none" stroke="#111" strokeWidth="2" />
        </svg>
        <svg viewBox="0 0 32 34" className="w-8 h-[34px]">
          <path d="M1 30l8-8 4-4 3 4 8 2v7z" fill="#fff" stroke="#111" strokeWidth="2" /><path d="M11 22L24 4" stroke="#111" strokeWidth="5" /><path d="M11 22L23 5" stroke="#f0dc30" strokeWidth="2.6" />
          <path d="M24 23h7v8h-7z" fill="#1028e0" stroke="#111" strokeWidth="1.4" />
        </svg>
        <div className="-mx-1 w-[38px] h-[46px] flex items-center justify-center rounded bg-[#0c50c0] shadow-[inset_0_0_3px_#062c7c]">
          <svg viewBox="0 0 34 34" className="w-[34px] h-[34px]">
            <path d="M2 11L12 1l10 10z" fill="#ddd" stroke="#111" strokeWidth="2" /><circle cx="10" cy="25" r="7" fill="#fff" stroke="#111" strokeWidth="1.6" />
            <path d="M31 5L21 27l-6 3" fill="none" stroke="#111" strokeWidth="5" /><path d="M30 7l-9 18" stroke="#aaa" strokeWidth="2" />
          </svg>
        </div>
      </div>
      <div className="relative w-[365px] flex items-center gap-[5px] pl-[23px] text-white border-l-2 border-[#0c3c94] bg-[linear-gradient(#0c64c8,#2ab4f4_8%,#1a9cf0_18%,#128ce8_40%,#149aee_85%,#0c60b8)]">
        <button aria-label="Show hidden icons" className="absolute -left-5 top-3 w-[37px] h-[37px] rounded-full border border-[#8ac4f4] bg-[radial-gradient(circle_at_35%_30%,#7cc0f8,#1c74dc_70%)]">
          <svg viewBox="0 0 36 36" className="w-full h-full"><path d="M22 9l-9 9 9 9" fill="none" stroke="#fff" strokeWidth="4.5" /></svg>
        </button>
        <svg viewBox="0 0 30 32" className="w-[30px] h-8">
          <circle cx="13" cy="14" r="12.5" fill="#f4b02c" stroke="#a86c14" strokeWidth="1.4" /><path d="M2 15h8l3-8 4 10" fill="none" stroke="#222" strokeWidth="2.6" />
          <circle cx="21" cy="22" r="9" fill="#35ad2e" stroke="#fff" strokeWidth="1.4" /><path d="M16 22l4 4 6-8" fill="none" stroke="#fff" strokeWidth="3" />
        </svg>
        <svg viewBox="0 0 30 32" className="w-[30px] h-8">
          <circle cx="15" cy="7" r="6" fill="#7ea8a4" stroke="#47706e" /><path d="M1 31c4-5 4-16 14-16s10 11 14 16z" fill="#8fb0bc" stroke="#4c7484" /><path d="M12 17c-4 3-5 8-5 13h9z" fill="#b8d498" />
        </svg>
        <svg viewBox="0 0 32 32" className="w-8 h-8">
          <path d="M1 10C3-2 29-2 31 10l-6-2-9 2-9-2z" fill="#1428c8" stroke="#0a1460" strokeWidth="1.6" /><path d="M3 9l7 7M29 9l-7 7" stroke="#111" strokeWidth="1.6" />
          <path d="M9 14h14v12H9z" fill="#e8e8e8" stroke="#111" strokeWidth="1.6" /><path d="M12 17h8v6h-8z" fill="#2848e8" /><path d="M6 28h20v3H6z" fill="#ddd" stroke="#111" />
        </svg>
        <OneNote className="w-8 h-8" />
        <svg viewBox="0 0 30 32" className="w-[30px] h-8">
          <ellipse cx="15" cy="16" rx="15" ry="16" fill="#1c70c4" /><path d="M9 30V13a8 8 0 1 1 6 8" fill="none" stroke="#fff" strokeWidth="5.5" />
        </svg>
        <svg viewBox="0 0 32 32" className="w-8 h-8" fill="none" strokeWidth="4">
          <path d="M19 3C9 3 3 11 4 20" stroke="#f4c42c" /><path d="M25 8c-9 0-14 6-14 14" stroke="#4aa43c" /><path d="M14 11c7-6 15-2 15 6 0 6-4 10-8 12" stroke="#e4442c" /><path d="M4 18c1 12 15 14 20-2" stroke="#4aa43c" />
        </svg>
        <time className="ml-auto pr-8 whitespace-nowrap">5:40 PM</time>
      </div>
    </div>
  )
}

export default function App() {
  return (
    <div className="h-screen flex flex-col overflow-hidden bg-[#8fa8e0]">
      <div className={clsx('flex-1 min-h-0 mr-1 flex flex-col rounded-t-[10px] bg-[#0a3ad8] text-black', ui)}>
        <TitleBar />
        <div className="flex-1 min-h-0 ml-2 mr-2 flex flex-col bg-[linear-gradient(90deg,#f4f5f4,#ede9da_70%)]">
          <MenuBar />
          <ToolBar />
          <AddressBar />
          <YahooBar />
          <TabBar />
          <Viewport />
          <StatusBar />
        </div>
        <div className="h-2 shrink-0 bg-[linear-gradient(#0a44e0,#00148c)]" />
      </div>
      <Taskbar />
    </div>
  )
}
